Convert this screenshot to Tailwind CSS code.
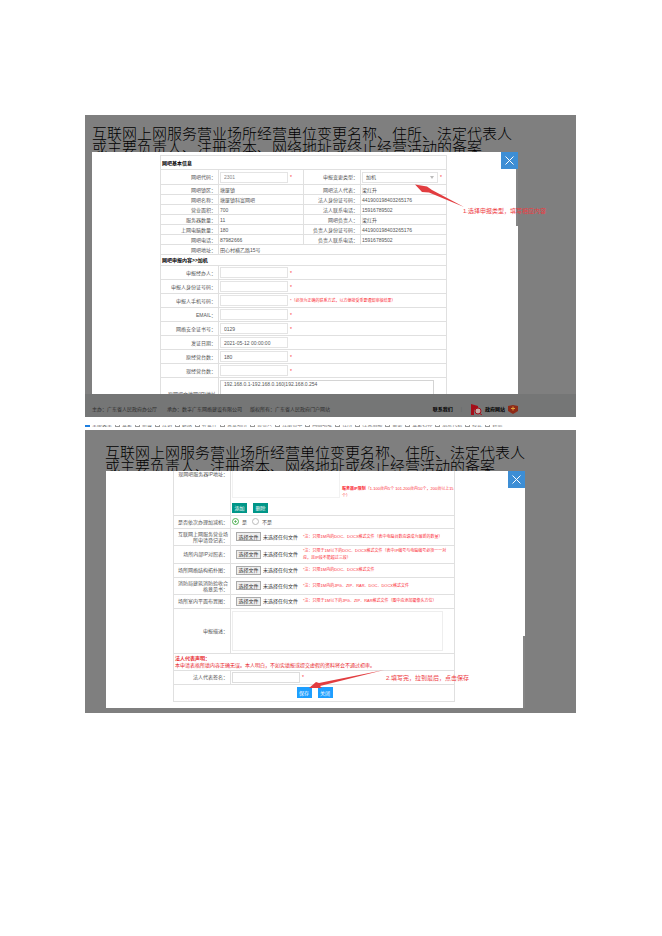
<!DOCTYPE html>
<html lang="zh-CN">
<head>
    <meta charset="UTF-8">
    <meta name="viewport" content="width=device-width, initial-scale=1.0">
    <title>网吧变更备案</title>
    <script src="https://cdn.jsdelivr.net/npm/@tailwindcss/browser@4"></script>
</head>
<body class="bg-white font-['Liberation_Sans','Noto_Sans_CJK_SC',sans-serif] text-[5px] leading-[6px] text-[#555]">
<main class="pt-[115px] pl-[85px] pr-[86px] pb-20">

    <!-- Step 1: basic info -->
    <section class="bg-[#7f7f7f] pt-3">
        <h1 class="h-[25px] overflow-hidden pl-[7px] text-[15px] leading-[14px] font-light text-black whitespace-nowrap">
            互联网上网服务营业场所经营单位变更名称、住所、法定代表人<br>或主要负责人、注册资本、网络地址或终止经营活动的备案
        </h1>
        <div class="relative ml-[7px] mr-[58px]">
            <div class="h-[242px] overflow-hidden bg-white pt-[3px] pl-[68px] pr-[71px]">
                <table class="w-full table-fixed border-collapse [&_td]:border [&_td]:border-[#e0e0e0] [&_td]:p-0 [&_td]:pl-[1px] [&_th]:border [&_th]:border-[#e0e0e0] [&_th]:p-0 [&_th]:pr-[2px] [&_th]:text-right [&_th]:font-normal">
                    <colgroup>
                        <col class="w-[58px]">
                        <col class="w-[85px]">
                        <col class="w-[57px]">
                        <col>
                    </colgroup>
                    <tbody>
                        <tr class="h-[14px]"><td colspan="4" class="font-bold text-black">网吧基本信息</td></tr>
                        <tr class="h-[15px]">
                            <th><label for="code">网吧代码：</label></th>
                            <td><div class="flex items-center gap-[2px]"><input id="code" type="text" value="2301" class="h-[11px] w-[68px] border border-[#e4e4e4] px-[3px] text-[#888]"><span class="text-red-500">*</span></div></td>
                            <th><label for="kind">申报变更类型：</label></th>
                            <td>
                                <div class="flex items-center gap-[2px]">
                                    <div class="relative w-[76px]">
                                        <select id="kind" class="block h-[11px] w-full appearance-none border border-[#e4e4e4] px-[3px]"><option>加机</option></select>
                                        <svg class="absolute top-[4px] right-[4px] h-[3px] w-[4px]" viewBox="0 0 4 3"><path d="M0 0h4L2 3z" fill="#bbb"/></svg>
                                    </div>
                                    <span class="text-red-500">*</span>
                                </div>
                            </td>
                        </tr>
                        <tr class="h-[10px]"><th>网吧镇区：</th><td>塘厦镇</td><th>网吧法人代表：</th><td>梁红升</td></tr>
                        <tr class="h-[10px]"><th>网吧名称：</th><td>塘厦镇科富网吧</td><th>法人身份证号码：</th><td>441900198403265176</td></tr>
                        <tr class="h-[10px]"><th>营业面积：</th><td>700</td><th>法人联系电话：</th><td>15916789502</td></tr>
                        <tr class="h-[10px]"><th>服务器数量：</th><td>11</td><th>网吧负责人：</th><td>梁红升</td></tr>
                        <tr class="h-[10px]"><th>上网电脑数量：</th><td>180</td><th>负责人身份证号码：</th><td>441900198403265176</td></tr>
                        <tr class="h-[10px]"><th>网吧电话：</th><td>87982666</td><th>负责人联系电话：</th><td>15916789502</td></tr>
                        <tr class="h-[10px]"><th>网吧地址：</th><td colspan="3">田心村横乙路15号</td></tr>
                        <tr class="h-[11px]"><td colspan="4" class="font-bold text-black">网吧申报内容&gt;&gt;加机</td></tr>
                        <tr class="h-[14px]">
                            <th><label for="agent">申报经办人：</label></th>
                            <td colspan="3"><div class="flex items-center gap-[2px]"><input id="agent" type="text" class="h-[11px] w-[68px] border border-[#e4e4e4] px-[3px]"><span class="text-red-500">*</span></div></td>
                        </tr>
                        <tr class="h-[14px]">
                            <th><label for="idno">申报人身份证号码：</label></th>
                            <td colspan="3"><div class="flex items-center gap-[2px]"><input id="idno" type="text" class="h-[11px] w-[68px] border border-[#e4e4e4] px-[3px]"><span class="text-red-500">*</span></div></td>
                        </tr>
                        <tr class="h-[14px]">
                            <th><label for="mobile">申报人手机号码：</label></th>
                            <td colspan="3"><div class="flex items-center gap-[2px]"><input id="mobile" type="text" class="h-[11px] w-[68px] border border-[#e4e4e4] px-[3px]"><span class="text-[4px] text-red-500">*（必须为正确的联系方式，以方便接受重要通知审核结果）</span></div></td>
                        </tr>
                        <tr class="h-[14px]">
                            <th><label for="email">EMAIL：</label></th>
                            <td colspan="3"><div class="flex items-center gap-[2px]"><input id="email" type="text" class="h-[11px] w-[68px] border border-[#e4e4e4] px-[3px]"><span class="text-red-500">*</span></div></td>
                        </tr>
                        <tr class="h-[14px]">
                            <th><label for="cert">网络安全证书号：</label></th>
                            <td colspan="3"><div class="flex items-center gap-[2px]"><input id="cert" type="text" value="0129" class="h-[11px] w-[68px] border border-[#e4e4e4] px-[3px]"><span class="text-red-500">*</span></div></td>
                        </tr>
                        <tr class="h-[14px]">
                            <th><label for="issued">发证日期：</label></th>
                            <td colspan="3"><input id="issued" type="text" value="2021-05-12 00:00:00" class="block h-[11px] w-[68px] border border-[#e4e4e4] px-[3px]"></td>
                        </tr>
                        <tr class="h-[14px]">
                            <th><label for="before">原经营台数：</label></th>
                            <td colspan="3"><div class="flex items-center gap-[2px]"><input id="before" type="text" value="180" class="h-[11px] w-[68px] border border-[#e4e4e4] px-[3px]"><span class="text-red-500">*</span></div></td>
                        </tr>
                        <tr class="h-[14px]">
                            <th><label for="after">现经营台数：</label></th>
                            <td colspan="3"><div class="flex items-center gap-[2px]"><input id="after" type="text" class="h-[11px] w-[68px] border border-[#e4e4e4] px-[3px]"><span class="text-red-500">*</span></div></td>
                        </tr>
                        <tr class="h-[32px]">
                            <th><label for="oldip">原网吧文地网(IP)地址</label></th>
                            <td colspan="3"><textarea id="oldip" class="block h-7 w-[214px] resize-none border border-[#d4d4d4] px-[3px]">192.168.0.1-192.168.0.160|192.168.0.254</textarea></td>
                        </tr>
                    </tbody>
                </table>
            </div>
            <div class="absolute top-[17px] right-0 h-[57px] w-[2px] bg-[#858585]"></div>
            <button type="button" aria-label="关闭" class="absolute top-0 right-0 flex size-[17px] items-center justify-center bg-[#3d8ed5]">
                <svg class="size-[9px]" viewBox="0 0 9 9" fill="none" stroke="#fff"><path d="M.5.5l8 8M8.500.5l-8 8"/></svg>
            </button>
            <!-- Arrow to the change type -->
            <svg class="absolute top-[32px] left-[322px] h-[24px] w-[52px]" viewBox="0 0 52 24" fill="#e23d40"><path d="M1 .5l12 2 5 3.500L50 23 15 8.500 8 8z"/></svg>
            <p class="absolute top-[56px] left-[371px] text-[6px] whitespace-nowrap text-[#ee3a3f]">1.选择申报类型，填写相应内容</p>
        </div>
        <footer class="flex h-[23px] items-center gap-2 overflow-hidden bg-[#757676] pt-[7px] pl-[7px] pr-[58px] text-[#2c2c2c]">
            <span class="mr-[2px]">主办：广东省人民政府办公厅</span>
            <span>承办：数字广东网络建设有限公司</span>
            <span>版权所有：广东省人民政府门户网站</span>
            <span class="ml-auto font-bold text-black">联系我们</span>
            <span class="text-[#666]">|</span>
            <span class="flex items-center gap-[3px] font-bold text-black">
                <svg class="h-[11px] w-[12px]" viewBox="0 0 12 11"><path d="M1 0l7 2v2L4 6v5H1z" fill="#a50e19"/><circle cx="8" cy="7" r="3" fill="#c9aaa6" stroke="#a50e19"/><path d="M9 9l3 2" stroke="#a50e19"/></svg>
                政府网站
                <svg class="h-[9px] w-[10px]" viewBox="0 0 10 9"><path d="M0 1l5-1 5 1v5L5 9 0 6z" fill="#8e2a17"/><path d="M5 1.500v4M3 3.500h4" stroke="#e0a03c"/></svg>
            </span>
        </footer>
    </section>

    <!-- Clipped filter row -->
    <div class="h-[13px] pt-[8px]">
        <div class="flex h-[2px] items-end gap-[3px] overflow-hidden whitespace-nowrap text-[#666] [&_input]:size-[5px] [&_input]:appearance-none [&_input]:border [&_input]:border-[#999] [&_label]:flex [&_label]:shrink-0 [&_label]:items-center [&_label]:gap-[2px]">
            <label><input type="checkbox" checked class="checked:border-[#1e7fe0]! checked:bg-[#1e7fe0]">全部类型</label>
            <label><input type="checkbox">变更</label>
            <label><input type="checkbox">新设</label>
            <label><input type="checkbox">注销</label>
            <label><input type="checkbox">延续</label>
            <label><input type="checkbox">补证件</label>
            <label><input type="checkbox">营业场所</label>
            <label><input type="checkbox">负责人</label>
            <label><input type="checkbox">注册资本</label>
            <label><input type="checkbox">网络地址</label>
            <label><input type="checkbox">住所</label>
            <label><input type="checkbox">经营活动</label>
            <label><input type="checkbox">备案</label>
            <label><input type="checkbox">变更名称</label>
            <label><input type="checkbox">法定代表</label>
            <label><input type="checkbox">终止</label>
            <label><input type="checkbox">其他</label>
        </div>
    </div>

    <!-- Step 2: attachments and submit -->
    <section class="bg-[#7f7f7f] pt-4 pb-[5px]">
        <h1 class="h-[25px] overflow-hidden pl-5 text-[15px] leading-[14px] font-light text-black whitespace-nowrap">
            互联网上网服务营业场所经营单位变更名称、住所、法定代表人<br>或主要负责人、注册资本、网络地址或终止经营活动的备案
        </h1>
        <div class="relative ml-[21px] mr-[51px]">
            <div class="h-[237px] overflow-hidden bg-white pl-[67px] pr-[70px]">
                <table class="w-full table-fixed border-collapse [&_td]:border [&_td]:border-[#e0e0e0] [&_td]:p-0 [&_td]:pl-[1px] [&_th]:border [&_th]:border-[#e0e0e0] [&_th]:p-0 [&_th]:pr-[2px] [&_th]:text-right [&_th]:font-normal">
                    <colgroup>
                        <col class="w-[57px]">
                        <col>
                    </colgroup>
                    <tbody>
                        <tr class="h-[44px]">
                            <th class="border-t-0! align-top"><label for="newip">现网吧服务器IP地址：</label></th>
                            <td class="border-t-0! align-top">
                                <div class="flex gap-[2px]">
                                    <textarea id="newip" class="block h-[27px] w-[108px] resize-none border border-t-0 border-[#f2f2f2]"></textarea>
                                    <p class="flex-1 pt-[14px] text-[4px] leading-[7px] text-red-500"><b>服务器IP限制</b>（1-100台内5个 101-200台内10个，200台以上15个）</p>
                                </div>
                                <div class="mt-[4px] flex gap-[6px] text-white">
                                    <button type="button" class="h-[10px] w-[15px] bg-[#009688]">添加</button>
                                    <button type="button" class="h-[10px] w-[15px] bg-[#009688]">删除</button>
                                </div>
                            </td>
                        </tr>
                        <tr class="h-[13px]">
                            <th>是否依次办理加减机：</th>
                            <td>
                                <div class="flex items-center gap-[5px] [&_input]:size-[7px] [&_input]:appearance-none [&_input]:rounded-full [&_input]:border [&_input]:border-[#bbb] [&_label]:flex [&_label]:items-center [&_label]:gap-[3px]">
                                    <label><input type="radio" name="again" checked class="checked:border-[#4cae50]! checked:bg-[radial-gradient(#4cae50_25%,white_35%)]">是</label>
                                    <label><input type="radio" name="again">不是</label>
                                </div>
                            </td>
                        </tr>
                        <tr class="h-[17px]">
                            <th>互联网上网服务营业场所申请登记表：</th>
                            <td>
                                <div class="flex items-center gap-[5px] pl-[4px]">
                                    <label class="flex shrink-0 items-center gap-[2px] text-[#333]"><input type="file" class="sr-only"><span class="flex h-[9px] w-[25px] items-center justify-center border border-[#aaa] bg-[#eee]">选择文件</span>未选择任何文件</label>
                                    <span class="text-[4px] text-red-500">*注：只限1M内的DOC、DOCX格式文件（表中电脑台数应填成为最新的数量）</span>
                                </div>
                            </td>
                        </tr>
                        <tr class="h-[18px]">
                            <th>场所内部IP对照表：</th>
                            <td>
                                <div class="flex items-center gap-[5px] pl-[4px]">
                                    <label class="flex shrink-0 items-center gap-[2px] text-[#333]"><input type="file" class="sr-only"><span class="flex h-[9px] w-[25px] items-center justify-center border border-[#aaa] bg-[#eee]">选择文件</span>未选择任何文件</label>
                                    <span class="text-[4px] leading-[7px] text-red-500">*注：只限于1M以下的DOC、DOCX格式文件（表中IP编号与电脑编号必须一一对应，且IP段不能超过三段）</span>
                                </div>
                            </td>
                        </tr>
                        <tr class="h-[14px]">
                            <th>场所网络结构拓扑图：</th>
                            <td>
                                <div class="flex items-center gap-[5px] pl-[4px]">
                                    <label class="flex shrink-0 items-center gap-[2px] text-[#333]"><input type="file" class="sr-only"><span class="flex h-[9px] w-[25px] items-center justify-center border border-[#aaa] bg-[#eee]">选择文件</span>未选择任何文件</label>
                                    <span class="text-[4px] text-red-500">*注：只限1M内的DOC、DOCX格式文件</span>
                                </div>
                            </td>
                        </tr>
                        <tr class="h-[17px]">
                            <th>消防局建筑消防验收合格意见书：</th>
                            <td>
                                <div class="flex items-center gap-[5px] pl-[4px]">
                                    <label class="flex shrink-0 items-center gap-[2px] text-[#333]"><input type="file" class="sr-only"><span class="flex h-[9px] w-[25px] items-center justify-center border border-[#aaa] bg-[#eee]">选择文件</span>未选择任何文件</label>
                                    <span class="text-[4px] text-red-500">*注：只限1M内的JPG、ZIP、RAR、DOC、DOCX格式文件</span>
                                </div>
                            </td>
                        </tr>
                        <tr class="h-[14px]">
                            <th>场所室内平面布置图：</th>
                            <td>
                                <div class="flex items-center gap-[5px] pl-[4px]">
                                    <label class="flex shrink-0 items-center gap-[2px] text-[#333]"><input type="file" class="sr-only"><span class="flex h-[9px] w-[25px] items-center justify-center border border-[#aaa] bg-[#eee]">选择文件</span>未选择任何文件</label>
                                    <span class="text-[4px] text-red-500">*注：只限于1M以下的JPG、ZIP、RAR格式文件（图中应添加摄像头方位）</span>
                                </div>
                            </td>
                        </tr>
                        <tr class="h-[45px]">
                            <th><label for="memo">申报描述：</label></th>
                            <td><textarea id="memo" class="block h-10 w-[211px] resize-none border border-[#eee]"></textarea></td>
                        </tr>
                        <tr class="h-[17px]">
                            <td colspan="2" class="leading-[7px] text-[#e8262b]"><b>法人代表声明：</b><br>本申请表格所填内容正确无误。本人明白，不如实填报或提交虚假的资料将会不通过初审。</td>
                        </tr>
                        <tr class="h-[14px]">
                            <th><label for="sign">法人代表签名：</label></th>
                            <td><div class="flex items-center gap-[2px]"><input id="sign" type="text" class="h-[11px] w-[68px] border border-[#ddd] px-[3px]"><span class="text-red-500">*</span></div></td>
                        </tr>
                        <tr class="h-[17px]">
                            <td colspan="2">
                                <div class="flex justify-center gap-[6px] text-white">
                                    <button type="button" class="h-[11px] w-[15px] bg-[#1e9fff]">保存</button>
                                    <button type="button" class="h-[11px] w-[15px] bg-[#1e9fff]">关闭</button>
                                </div>
                            </td>
                        </tr>
                    </tbody>
                </table>
            </div>
            <div class="absolute right-0 bottom-0 h-[72px] w-[2px] bg-[#858585]"></div>
            <button type="button" aria-label="关闭" class="absolute top-0 right-0 flex size-[17px] items-center justify-center bg-[#3d8ed5]">
                <svg class="size-[9px]" viewBox="0 0 9 9" fill="none" stroke="#fff"><path d="M.5.5l8 8M8.500.5l-8 8"/></svg>
            </button>
            <!-- Arrow to the save button -->
            <svg class="absolute top-[198px] left-[202px] h-[21px] w-[78px]" viewBox="0 0 78 21" fill="#e23d40"><path d="M1 19l7-6 3 1L76 1 12 17l2 2z"/></svg>
            <p class="absolute top-[204px] left-[280px] text-[6px] whitespace-nowrap text-[#ee3a3f]">2.填写完，拉到最后，点击保存</p>
        </div>
    </section>
</main>
</body>
</html>
